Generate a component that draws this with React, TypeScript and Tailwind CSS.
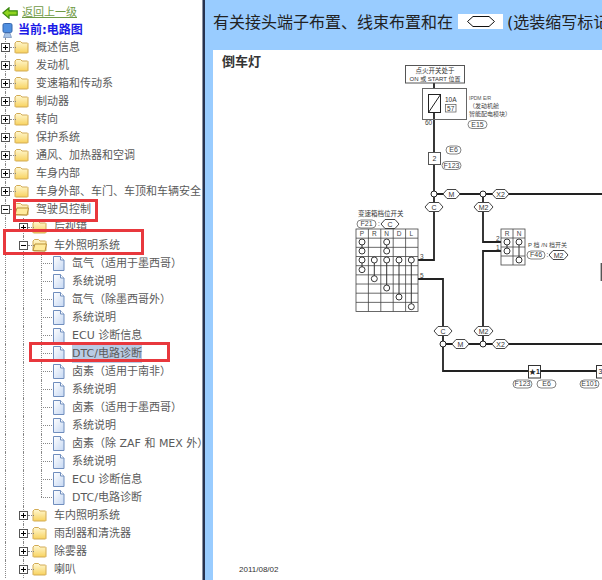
const FONT = "font-['DejaVu_Sans','Noto_Sans_CJK_SC',sans-serif]";

type Node = {
  label: string;
  level: 0 | 1 | 2;
  state?: "closed" | "open";
  selected?: boolean;
};

const tree: Node[] = [
  { label: "概述信息", level: 0, state: "closed" },
  { label: "发动机", level: 0, state: "closed" },
  { label: "变速箱和传动系", level: 0, state: "closed" },
  { label: "制动器", level: 0, state: "closed" },
  { label: "转向", level: 0, state: "closed" },
  { label: "保护系统", level: 0, state: "closed" },
  { label: "通风、加热器和空调", level: 0, state: "closed" },
  { label: "车身内部", level: 0, state: "closed" },
  { label: "车身外部、车门、车顶和车辆安全", level: 0, state: "closed" },
  { label: "驾驶员控制", level: 0, state: "open" },
  { label: "后视镜", level: 1, state: "closed" },
  { label: "车外照明系统", level: 1, state: "open" },
  { label: "氙气（适用于墨西哥）", level: 2 },
  { label: "系统说明", level: 2 },
  { label: "氙气（除墨西哥外）", level: 2 },
  { label: "系统说明", level: 2 },
  { label: "ECU 诊断信息", level: 2 },
  { label: "DTC/电路诊断", level: 2, selected: true },
  { label: "卤素（适用于南非）", level: 2 },
  { label: "系统说明", level: 2 },
  { label: "卤素（适用于墨西哥）", level: 2 },
  { label: "系统说明", level: 2 },
  { label: "卤素（除 ZAF 和 MEX 外）", level: 2 },
  { label: "系统说明", level: 2 },
  { label: "ECU 诊断信息", level: 2 },
  { label: "DTC/电路诊断", level: 2 },
  { label: "车内照明系统", level: 1, state: "closed" },
  { label: "雨刮器和清洗器", level: 1, state: "closed" },
  { label: "除雾器", level: 1, state: "closed" },
  { label: "喇叭", level: 1, state: "closed" },
];

function Guide() {
  return (
    <span className="flex h-full w-[18px] shrink-0 justify-center">
      <span className="h-full border-l border-dotted border-[#888]" />
    </span>
  );
}

function Toggle({ open }: { open: boolean }) {
  return (
    <span className="relative flex h-full w-[18px] shrink-0 items-center justify-center">
      <span className="absolute left-[9px] h-full border-l border-dotted border-[#888]" />
      <span className="absolute left-[14px] w-[6px] border-t border-dotted border-[#888]" />
      <svg width="9" height="9" viewBox="0 0 9 9" className="relative">
        <rect x="0.5" y="0.5" width="8" height="8" fill="#fff" stroke="#555" />
        <path d={open ? "M2 4.5h5" : "M2 4.5h5M4.5 2v5"} stroke="#000" />
      </svg>
    </span>
  );
}

function Folder({ open }: { open: boolean }) {
  return (
    <svg width="15" height="14" viewBox="0 0 15 14" className="shrink-0">
      <defs>
        <linearGradient id="fold" x1="0" y1="0" x2="0" y2="1">
          <stop offset="0" stopColor="#fff8d2" />
          <stop offset="1" stopColor="#f8d25e" />
        </linearGradient>
      </defs>
      <path
        d="M1 3 2.5 1.5h4L8 3h5.5l.5.5v9l-.5.5h-12L1 12.5z"
        fill="url(#fold)"
        stroke="#d2ab55"
      />
      {open && <path d="M1 12.5 3 6h11.5L13 13z" fill="#ffeb9c" stroke="#b9913a" />}
    </svg>
  );
}

function Doc() {
  return (
    <svg width="13" height="15" viewBox="0 0 13 15" className="shrink-0">
      <defs>
        <linearGradient id="page" x1="0" y1="0" x2="1" y2="1">
          <stop offset="0" stopColor="#ffffff" />
          <stop offset="1" stopColor="#c6d8f3" />
        </linearGradient>
      </defs>
      <path d="M1.5.5h7l3.5 3.5v10.5h-10.5z" fill="url(#page)" stroke="#6f8dbd" />
      <path d="M8.5.5v3.5h3.5" fill="#fff" stroke="#6f8dbd" />
    </svg>
  );
}

function Indent({ level }: { level: number }) {
  return (
    <>
      {level > 0 && <Guide />}
      {level > 1 && <Guide />}
    </>
  );
}

function Row({ node, last }: { node: Node; last: boolean }) {
  return (
    <div className="flex h-[18px] items-center whitespace-nowrap">
      <Indent level={node.level} />
      {node.state ? (
        <>
          <Toggle open={node.state === "open"} />
          <Folder open={node.state === "open"} />
          <span className="ml-[7px] translate-y-[1px] text-[#5a5a5a]">{node.label}</span>
        </>
      ) : (
        <>
          <span className="relative h-full w-[20px] shrink-0">
            <span
              className={`absolute left-[9px] top-0 border-l border-dotted border-[#888] ${last ? "h-1/2" : "h-full"}`}
            />
            <span className="absolute left-[9px] top-1/2 w-[11px] border-t border-dotted border-[#888]" />
          </span>
          <Doc />
          <span
            className={`ml-[7px] translate-y-[1px] text-[#5a5a5a] ${node.selected ? "bg-[#b9cbe4]" : ""}`}
          >
            {node.label}
          </span>
        </>
      )}
    </div>
  );
}

function Pill({ x, y, w, t }: { x: number; y: number; w: number; t: string }) {
  return (
    <g>
      <rect x={x} y={y - 4} width={w} height={8} rx={4} fill="#fff" stroke="#666" strokeWidth="0.8" />
      <text x={x + w / 2} y={y + 2.4} textAnchor="middle" fontSize="7" fill="#444">
        {t}
      </text>
    </g>
  );
}

function Hex({ cx, cy, w, t }: { cx: number; cy: number; w: number; t: string }) {
  const h = w / 2;
  return (
    <g>
      <path
        d={`M${cx - h} ${cy} L${cx - h + 4} ${cy - 4.5} H${cx + h - 4} L${cx + h} ${cy} L${cx + h - 4} ${cy + 4.5} H${cx - h + 4} Z`}
        fill="#fff"
        stroke="#444"
      />
      <text x={cx} y={cy + 2.5} textAnchor="middle" fontSize="7" fill="#333">
        {t}
      </text>
    </g>
  );
}

function Dot({ x, y }: { x: number; y: number }) {
  return <circle cx={x} cy={y} r={3} fill="#fff" stroke="#222" strokeWidth="1" />;
}

const colX = [362, 374.3, 386.7, 399, 411.3];
const rowY = [242, 251, 260, 269.7, 278.7, 288, 297, 306.7];
const switchLinks = [
  [0, 0, 1],
  [0, 2, 3],
  [1, 2, 4],
  [2, 0, 1],
  [2, 2, 5],
  [3, 2, 6],
  [4, 2, 7],
];

function Diagram() {
  return (
    <svg
      viewBox="213 50 389 530"
      className="absolute inset-0 h-full w-full"
      fontFamily="'Liberation Sans','Noto Sans CJK SC',sans-serif"
    >
      {/* wires */}
      <g fill="none" stroke="#222" strokeWidth="1.8">
        <path d="M434 83V260H418" />
        <path d="M434 194H483V242H501" />
        <path d="M501 251H483V344" />
        <path d="M418 279H443V371H528" />
        <path d="M443 344H483" />
        <path d="M541 371H596" />
        <path d="M483 194H602M483 344H602" />
        <path d="M601.5 263V281" stroke="#555" />
      </g>

      {/* ignition + ipdm */}
      <rect x="405.5" y="65.5" width="59" height="17.5" fill="#fff" stroke="#555" />
      <text x="435" y="73" textAnchor="middle" fontSize="6.5" fill="#333">
        点火开关处于
      </text>
      <text x="435" y="80.5" textAnchor="middle" fontSize="6" fill="#333">
        ON 或 START 位置
      </text>
      <rect x="422.5" y="88.5" width="44" height="31" fill="#fff" stroke="#666" />
      <rect x="428.5" y="94.5" width="12" height="18" fill="#fff" stroke="#222" />
      <path d="M428.5 112.5 440.5 94.5" stroke="#222" />
      <text x="445" y="102" fontSize="6.5" fill="#333">
        10A
      </text>
      <rect x="445.5" y="104.5" width="10.5" height="7.5" fill="#fff" stroke="#555" strokeWidth="0.7" />
      <text x="450.7" y="110.5" textAnchor="middle" fontSize="6.5" fill="#333">
        57
      </text>
      <text x="469" y="100" fontSize="5" fill="#555">
        IPDM E/R
      </text>
      <text x="469" y="108" fontSize="6" fill="#444">
        （发动机舱
      </text>
      <text x="469" y="116" fontSize="6" fill="#444">
        智能配电模块）
      </text>
      <Pill x={468} y={124.5} w={19} t="E15" />
      <text x="425" y="125" fontSize="6.5" fill="#444">
        60
      </text>
      <path d="M434 113V119" stroke="#222" strokeWidth="1.8" />

      <rect x="428.5" y="152.5" width="12" height="12" fill="#fff" stroke="#555" />
      <text x="434.5" y="161" textAnchor="middle" fontSize="7" fill="#333">
        2
      </text>
      <Pill x={446} y={150} w={15} t="E6" />
      <Pill x={442} y={165.5} w={19} t="F123" />

      <Dot x={434} y={194} />
      <Dot x={483} y={194} />
      <Hex cx={451.5} cy={194} w={17} t="M" />
      <Hex cx={500.5} cy={194} w={17} t="X2" />
      <Hex cx={434} cy={207} w={18} t="C" />
      <Hex cx={483.5} cy={207} w={19} t="M2" />

      {/* range switch */}
      <text x="358" y="216" fontSize="6.5" fill="#333">
        变速箱档位开关
      </text>
      <Pill x={357} y={224} w={19} t="F21" />
      <text x="378" y="226" fontSize="6.5" fill="#333">
        :
      </text>
      <Hex cx={390} cy={224} w={18} t="C" />
      <g stroke="#444" strokeWidth="0.8" fill="none">
        <rect x="356" y="229" width="62" height="82.5" fill="#fff" />
        {[1, 2, 3, 4].map((i) => (
          <path key={i} d={`M${356 + i * 12.4} 229V311.5`} />
        ))}
        {[1, 2, 3, 4, 5, 6, 7, 8].map((i) => (
          <path key={i} d={`M356 ${229 + i * 9.17}H418`} />
        ))}
      </g>
      {["P", "R", "N", "D", "L"].map((t, i) => (
        <text key={t} x={colX[i]} y={236} textAnchor="middle" fontSize="6.5" fill="#444">
          {t}
        </text>
      ))}
      {switchLinks.map(([c, a, b]) => (
        <g key={`${c}-${a}`}>
          <path d={`M${colX[c]} ${rowY[a]}V${rowY[b]}`} stroke="#333" />
          <circle cx={colX[c]} cy={rowY[a]} r={3} fill="#fff" stroke="#222" strokeWidth="0.9" />
          <circle cx={colX[c]} cy={rowY[b]} r={3} fill="#fff" stroke="#222" strokeWidth="0.9" />
        </g>
      ))}
      <text x="420" y="259" fontSize="6.5" fill="#444">
        3
      </text>
      <text x="420" y="278" fontSize="6.5" fill="#444">
        5
      </text>

      {/* p/n switch */}
      <g stroke="#444" strokeWidth="0.8" fill="none">
        <rect x="501" y="229" width="24" height="36" fill="#fff" />
        <path d="M513 229V265M501 238H525M501 247H525M501 256H525" />
      </g>
      <text x="507" y="236" textAnchor="middle" fontSize="6.5" fill="#444">
        R
      </text>
      <text x="519" y="236" textAnchor="middle" fontSize="6.5" fill="#444">
        N
      </text>
      <path d="M507 242V251M519 242V260" stroke="#333" />
      <circle cx="507" cy="242" r="3" fill="#fff" stroke="#222" strokeWidth="0.9" />
      <circle cx="507" cy="251" r="3" fill="#fff" stroke="#222" strokeWidth="0.9" />
      <circle cx="519" cy="242" r="3" fill="#fff" stroke="#222" strokeWidth="0.9" />
      <circle cx="519" cy="260" r="3" fill="#fff" stroke="#222" strokeWidth="0.9" />
      <text x="496" y="241" fontSize="6.5" fill="#444">
        2
      </text>
      <text x="496" y="250" fontSize="6.5" fill="#444">
        1
      </text>
      <text x="528" y="247" fontSize="6" fill="#444">
        P 档 /N 档开关
      </text>
      <Pill x={527} y={255} w={18} t="F46" />
      <text x="546.5" y="257" fontSize="6.5" fill="#333">
        :
      </text>
      <Hex cx={558.5} cy={255} w={19} t="M2" />

      {/* lower junctions */}
      <Hex cx={443} cy={331} w={18} t="C" />
      <Hex cx={483.5} cy={331} w={19} t="M2" />
      <Dot x={443} y={344} />
      <Dot x={483} y={344} />
      <Hex cx={460.5} cy={344} w={17} t="M" />
      <Hex cx={500.5} cy={344} w={17} t="X2" />

      <rect x="528.5" y="365.5" width="12" height="12.5" fill="#fff" stroke="#333" />
      <text x="534.5" y="374" textAnchor="middle" fontSize="7" fontWeight="700" fill="#222">
        ★1
      </text>
      <rect x="596.5" y="365.5" width="12" height="12.5" fill="#fff" stroke="#333" />
      <text x="598.5" y="374" fontSize="7" fill="#222">
        3
      </text>
      <Pill x={513} y={384} w={19} t="F123" />
      <Pill x={537} y={384} w={19} t="E6" />
      <Pill x={580} y={384} w={19} t="E101" />
    </svg>
  );
}

export default function App() {
  return (
    <div className={`flex h-[580px] w-[602px] overflow-hidden bg-white ${FONT}`}>
      <aside className="relative h-full w-[202px] shrink-0 overflow-hidden pt-[4px] text-[11px] leading-[18px]">
        <div className="flex h-[18px] items-center pl-[2px]">
          <svg width="16" height="12" viewBox="0 0 16 12" className="shrink-0">
            <path d="M.8 6 7 .8v3h8.200v4.400H7v3z" fill="#8fd41f" stroke="#3d8a10" strokeWidth="1.2" />
          </svg>
          <span className="ml-[4px] text-[#6f9a45] underline">返回上一级</span>
        </div>
        <div className="flex h-[16px] items-center pl-[2px]">
          <svg width="11" height="15" viewBox="0 0 11 15" className="shrink-0">
            <rect x="1" y="0.5" width="9" height="9" rx="1.5" fill="#4f8fe0" stroke="#3666ad" />
            <path d="M3 10h5l1.500 4.500h-8z" fill="#a9c4e6" stroke="#5f7fb2" strokeWidth="0.6" />
          </svg>
          <span className="ml-[5px] text-[12px] font-bold text-[#1a1ae6]">当前:电路图</span>
        </div>
        <div className="-ml-1">
          {tree.map((node, i) => (
            <Row key={i} node={node} last={i === 25} />
          ))}
        </div>
        {/* red annotations drawn on top of the tree */}
        <div className="absolute left-[13px] top-[199px] h-[23px] w-[85px] border-[3px] border-[#e8383d]" />
        <div className="absolute left-[3px] top-[229px] h-[26px] w-[141px] border-[3px] border-[#e8383d]" />
        <div className="absolute left-[29px] top-[342px] h-[20px] w-[141px] border-[3px] border-[#e8383d]" />
      </aside>

      <div className="h-full w-[3px] shrink-0 border-l border-[#8a90a0] bg-[#26324f]" />

      <main className="flex min-w-0 flex-1 flex-col bg-[#99ccff] pl-[8px]">
        <div className="flex h-[50px] shrink-0 items-start whitespace-nowrap pt-[14px] text-[16px] leading-[18px] text-[#222]">
          <span>有关接头端子布置、线束布置和在</span>
          <span className="ml-[5px] flex h-[15px] w-[45px] shrink-0 items-center justify-center bg-white">
            <svg width="28" height="11" viewBox="0 0 28 11">
              <path d="M.5 5.500 6 .5h16l5.500 5-5.500 5H6z" fill="#fff" stroke="#111" />
            </svg>
          </span>
          <span className="ml-[4px]">(选装缩写标记</span>
        </div>
        <div className="relative min-h-0 flex-1 bg-white">
          <Diagram />
          <p className="absolute left-[9px] top-[3px] text-[13px] font-bold leading-[17px] text-[#333]">
            倒车灯
          </p>
          <p className="absolute bottom-[5px] left-[26px] font-['Liberation_Sans'] text-[8px] leading-[10px] text-[#333]">
            2011/08/02
          </p>
        </div>
      </main>
    </div>
  );
}
